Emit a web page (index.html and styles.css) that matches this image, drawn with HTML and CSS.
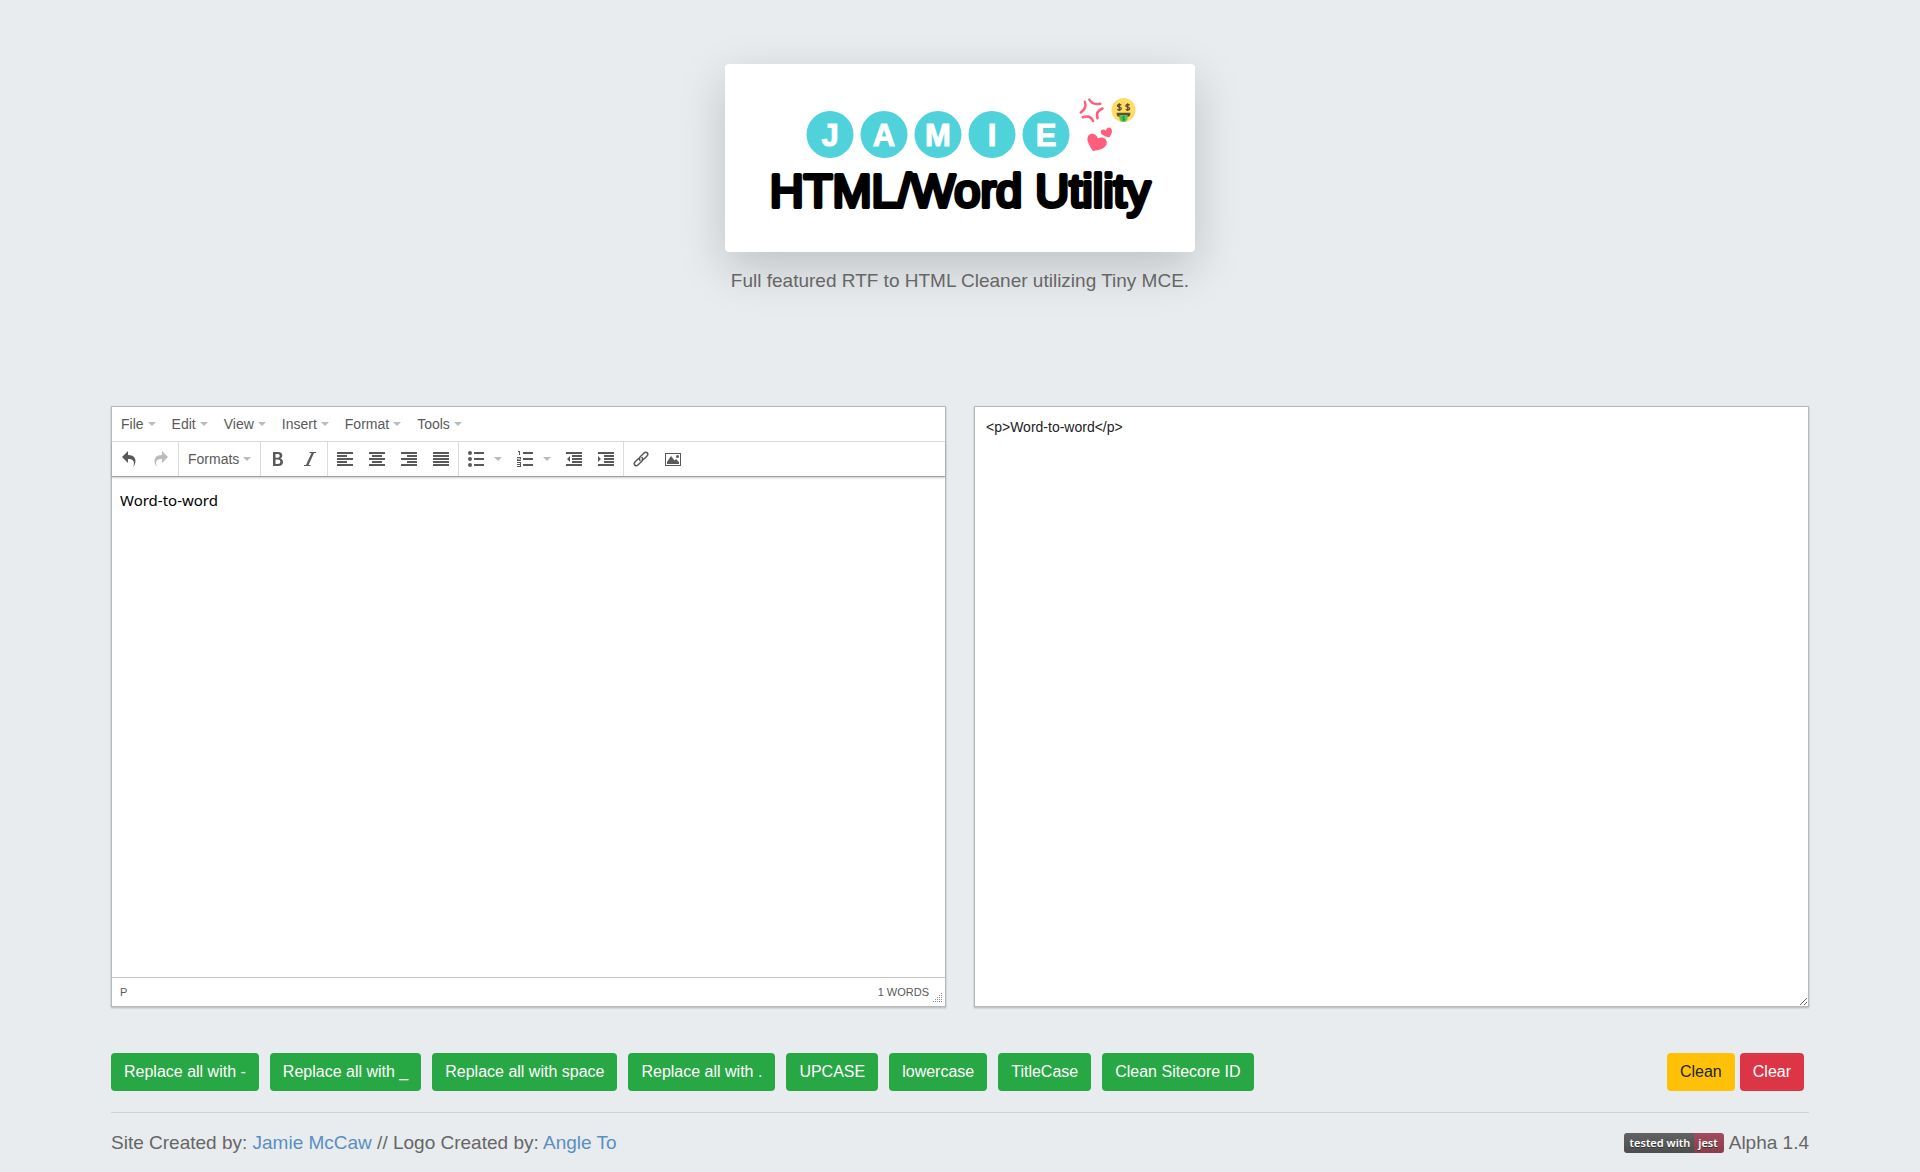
FILE: index.html
```html
<!DOCTYPE html>
<html lang="en">
<head>
<meta charset="utf-8">
<title>HTML/Word Utility</title>
<link rel="stylesheet" href="styles.css">
</head>
<body>
<header class="masthead">
  <svg class="logo" viewBox="0 0 470 188" role="img" aria-label="Jamie HTML/Word Utility">
    <g fill="#4fd2da">
      <circle cx="105" cy="70.500" r="23.500"/><circle cx="159" cy="70.500" r="23.500"/><circle cx="213" cy="70.500" r="23.500"/><circle cx="267" cy="70.500" r="23.500"/><circle cx="321" cy="70.500" r="23.500"/>
    </g>
    <g class="logo-initials">
      <text x="105" y="82">J</text><text x="159" y="82">A</text><text x="213" y="82">M</text><text x="267" y="82">I</text><text x="321" y="82">E</text>
    </g>
    <text class="logo-title" x="235" y="143">HTML/Word Utility</text>
    <g fill="none" stroke="#ff5d7c" stroke-width="2.500" stroke-linecap="round">
      <path d="M364.300 35.500Q367.500 41.300 375.300 39.700"/>
      <path d="M359.800 37.800Q362.500 43.500 355.800 48.500"/>
      <path d="M377.500 44.500Q370.200 47.500 372.500 54.300"/>
      <path d="M357.800 53.300Q365.500 50.800 368 57"/>
    </g>
    <circle cx="398.500" cy="46" r="12" fill="#ffdc67"/>
    <path d="M391.700 48.800H405.300V50.800Q405 52.600 403 52.800H394Q392 52.600 391.700 50.800Z" fill="#664e27"/>
    <path d="M394.500 51H402.500V54.500Q402 58 398.500 58Q395 58 394.500 54.500Z" fill="#4bc958"/>
    <g fill="none" stroke="#664e27" stroke-width="1.300">
      <path d="M396.300 41.200Q394.300 39.800 392.600 41.200Q392 42.600 394.300 43.100Q396.800 43.700 396.100 45.200Q394.300 46.700 392.300 45.200M394.300 39.300V47"/>
      <path d="M404.700 41.200Q402.700 39.800 401 41.200Q400.400 42.600 402.700 43.100Q405.200 43.700 404.500 45.200Q402.700 46.700 400.700 45.200M402.700 39.300V47"/>
    </g>
    <path d="M399.800 52.800Q397.500 52 397.300 53.400Q397.500 54.200 398.500 54.300Q400 54.600 399.600 55.700Q398.500 56.500 397.200 55.800M398.500 52V57" fill="none" stroke="#2b8837" stroke-width=".8"/>
    <path d="M368 87C363 80 361 74.500 363.500 71.500C366 68.300 371.500 69.300 373 74.500C377 71.800 382 74.300 381.800 78.500C381.500 84 376 86 368 87Z" fill="#ff5d7c"/>
    <path d="M384.500 73.300C379 72.500 375.800 70.500 375.800 67.800C376 65.300 379 64.600 381 66.700C381.500 63.500 384.800 62.600 386.300 64.800C387.800 67 386.800 70 384.500 73.300Z" fill="#ff5d7c"/>
  </svg>
  <p class="tagline">Full featured RTF to HTML Cleaner utilizing Tiny MCE.</p>
</header>

<main class="container">
  <div class="panes">
    <section class="editor" aria-label="Rich text editor">
      <div class="menubar">
        <button class="tool" type="button">File<i class="caret"></i></button>
        <button class="tool" type="button">Edit<i class="caret"></i></button>
        <button class="tool" type="button">View<i class="caret"></i></button>
        <button class="tool" type="button">Insert<i class="caret"></i></button>
        <button class="tool" type="button">Format<i class="caret"></i></button>
        <button class="tool" type="button">Tools<i class="caret"></i></button>
      </div>
      <div class="toolbar">
        <div class="group">
          <button class="tool" type="button" aria-label="Undo"><svg class="icon" viewBox="0 0 1024 1024"><path d="M761.862 1024c113.726-206.032 132.888-520.304-313.862-509.824v253.824l-384-384 384-384v248.372c534.962-13.942 594.570 472.214 313.862 775.628z"/></svg></button>
          <button class="tool" type="button" aria-label="Redo" disabled><svg class="icon" viewBox="0 0 1024 1024"><path d="M576 248.372v-248.372l384 384-384 384v-253.824c-446.750-10.482-427.588 303.792-313.860 509.824-280.712-303.414-221.100-789.570 313.860-775.628z"/></svg></button>
        </div>
        <div class="group">
          <button class="tool" type="button">Formats<i class="caret"></i></button>
        </div>
        <div class="group">
          <button class="tool" type="button" aria-label="Bold"><svg class="icon" viewBox="0 0 16 16"><path fill-rule="evenodd" d="M3 1H8C11 1 12.300 2.500 12.300 4.500C12.300 6 11.500 7 10.300 7.500C12 8 13 9.200 13 11C13 13.500 11.300 15 8.300 15H3ZM5.500 3V6.700H7.500C9 6.700 9.700 6 9.700 4.800C9.700 3.500 9 3 7.500 3ZM5.500 8.600V13H7.800C9.500 13 10.300 12.200 10.300 10.800C10.300 9.300 9.500 8.600 7.800 8.600Z"/></svg></button>
          <button class="tool" type="button" aria-label="Italic"><svg class="icon" viewBox="0 0 16 16"><path d="M14 1V2H12L6.500 14H8.500V15H2V14H4L9.500 2H7.500V1Z"/></svg></button>
        </div>
        <div class="group">
          <button class="tool" type="button" aria-label="Align left"><svg class="icon" viewBox="0 0 16 16"><path d="M0 1h16v2H0zM0 4h10v2H0zM0 7h16v2H0zM0 10h10v2H0zM0 13h16v2H0z"/></svg></button>
          <button class="tool" type="button" aria-label="Align center"><svg class="icon" viewBox="0 0 16 16"><path d="M0 1h16v2H0zM3 4h10v2H3zM0 7h16v2H0zM3 10h10v2H3zM0 13h16v2H0z"/></svg></button>
          <button class="tool" type="button" aria-label="Align right"><svg class="icon" viewBox="0 0 16 16"><path d="M0 1h16v2H0zM6 4h10v2H6zM0 7h16v2H0zM6 10h10v2H6zM0 13h16v2H0z"/></svg></button>
          <button class="tool" type="button" aria-label="Justify"><svg class="icon" viewBox="0 0 16 16"><path d="M0 1h16v2H0zM0 4h16v2H0zM0 7h16v2H0zM0 10h16v2H0zM0 13h16v2H0z"/></svg></button>
        </div>
        <div class="group">
          <button class="tool split" type="button" aria-label="Bullet list"><svg class="icon" viewBox="0 0 16 16"><circle cx="2" cy="2" r="2"/><circle cx="2" cy="8" r="2"/><circle cx="2" cy="14" r="2"/><path d="M6 1h10v2H6zM6 7h10v2H6zM6 13h10v2H6z"/></svg><i class="caret"></i></button>
          <button class="tool split" type="button" aria-label="Numbered list"><svg class="icon" viewBox="0 0 16 16"><path d="M6 1h10v2H6zM6 7h10v2H6zM6 13h10v2H6zM1 0h2v4H2V1H1zM0 6h4v2.500H1V9h3v1H0V7.700h3V7H0zM0 11h4v5H0v-1h3v-1H0v-1h3v-1H0z"/></svg><i class="caret"></i></button>
          <button class="tool" type="button" aria-label="Decrease indent"><svg class="icon" viewBox="0 0 16 16"><path d="M0 1h16v2H0zM6 4h10v2H6zM6 7h10v2H6zM6 10h10v2H6zM0 13h16v2H0zM4 5v6L1 8z"/></svg></button>
          <button class="tool" type="button" aria-label="Increase indent"><svg class="icon" viewBox="0 0 16 16"><path d="M0 1h16v2H0zM6 4h10v2H6zM6 7h10v2H6zM6 10h10v2H6zM0 13h16v2H0zM0 5v6l3-3z"/></svg></button>
        </div>
        <div class="group">
          <button class="tool" type="button" aria-label="Insert link"><svg class="icon" viewBox="0 0 16 16"><g fill="none" stroke="#595959" stroke-width="1.500" stroke-linecap="round"><path d="M7 9.500C6 8.500 6 7 7 6L10.800 2.200C12 1 13.300 1 14.200 1.900S15 4 13.800 5.200L11 8Q10.200 8.700 9.300 8.500"/><path d="M9 6.500C10 7.500 10 9 9 10L5.200 13.800C4 15 2.700 15 1.800 14.100S1 12 2.200 10.800L5 8Q5.800 7.300 6.700 7.500"/></g></svg></button>
          <button class="tool" type="button" aria-label="Insert image"><svg class="icon" viewBox="0 0 16 16"><path fill-rule="evenodd" d="M0 2h16v13H0zM1 3v11h14V3z"/><path d="M2 13V11L6 5L9.500 9.500L11 8L14 11V13Z"/><circle cx="12.500" cy="5.500" r="1.500"/></svg></button>
        </div>
      </div>
      <div class="document" contenteditable="true" spellcheck="false" role="textbox" aria-label="Document"><p>Word-to-word</p></div>
      <div class="statusbar">
        <span>P</span>
        <span class="wordcount">1 WORDS</span>
        <svg class="grip" viewBox="0 0 10 10" fill="#8c8c8c"><path d="M8 0h1v1h-1zM6 2h1v1h-1zM8 2h1v1h-1zM4 4h1v1h-1zM6 4h1v1h-1zM8 4h1v1h-1zM2 6h1v1h-1zM4 6h1v1h-1zM6 6h1v1h-1zM8 6h1v1h-1zM0 8h1v1h-1zM2 8h1v1h-1zM4 8h1v1h-1zM6 8h1v1h-1zM8 8h1v1h-1z"/></svg>
      </div>
    </section>
    <textarea class="source" aria-label="HTML source" spellcheck="false">&lt;p&gt;Word-to-word&lt;/p&gt;</textarea>
  </div>

  <div class="actions">
    <div class="transforms">
      <button class="btn" type="button">Replace all with -</button>
      <button class="btn" type="button">Replace all with _</button>
      <button class="btn" type="button">Replace all with space</button>
      <button class="btn" type="button">Replace all with .</button>
      <button class="btn" type="button">UPCASE</button>
      <button class="btn" type="button">lowercase</button>
      <button class="btn" type="button">TitleCase</button>
      <button class="btn" type="button">Clean Sitecore ID</button>
    </div>
    <div class="resets">
      <button class="btn btn-warning" type="button">Clean</button>
      <button class="btn btn-danger" type="button">Clear</button>
    </div>
  </div>
</main>

<footer class="container">
  <div class="credits">
    <p>Site Created by: <a href="#">Jamie McCaw</a> // Logo Created by: <a href="#">Angle To</a></p>
    <p class="version"><span class="badge"><span class="badge-label">tested with</span><span class="badge-value">jest</span></span>Alpha 1.4</p>
  </div>
</footer>
</body>
</html>
```
FILE: styles.css
```css
* {
  box-sizing: border-box;
}

body {
  margin: 0;
  background: #e8ecef;
  color: #666;
  font: 19px/28px "Liberation Sans", Arial, sans-serif;
}

p {
  margin: 0;
}

a {
  color: #5a8fc0;
  text-decoration: none;
}

button {
  margin: 0;
  border: 0;
  font-family: inherit;
  cursor: pointer;
}

.masthead {
  display: flex;
  flex-direction: column;
  align-items: center;
  gap: 15px;
  padding: 64px 16px 111px;
}

.logo {
  width: 470px;
  max-width: 100%;
  border-radius: 4px;
  background: #fff;
  box-shadow: 0 16px 48px rgba(0, 0, 0, .18);
}

.logo-initials {
  fill: #fff;
  stroke: #fff;
  stroke-width: 1px;
  font-size: 31px;
  font-weight: bold;
  text-anchor: middle;
}

.logo-title {
  fill: #000;
  stroke: #000;
  stroke-width: 4px;
  stroke-linejoin: round;
  font-size: 47px;
  text-anchor: middle;
}

.container {
  width: 90%;
  margin: 0 auto;
  padding: 0 15px;
}

.panes {
  display: grid;
  grid-template-columns: 1fr 1fr;
  gap: 28px;
}

.editor,
.source {
  border: 1px solid #b8b8b8;
  background: #fff;
  box-shadow: 0 1px 2px rgba(0, 0, 0, .25);
}

.menubar,
.toolbar {
  display: flex;
}

.menubar {
  padding: 0 1px;
  border-bottom: 1px solid #dcdcdc;
}

.toolbar {
  border-bottom: 1px solid #9e9e9e;
  box-shadow: 0 1px 2px rgba(0, 0, 0, .2);
}

.group {
  display: flex;
  padding: 0 1px;
}

.group + .group {
  border-left: 1px solid #dcdcdc;
}

.tool {
  display: flex;
  align-items: center;
  gap: 4px;
  height: 34px;
  padding: 0 8px;
  background: none;
  color: #595959;
  font-size: 14px;
}

.tool:disabled {
  opacity: .4;
}

.split {
  gap: 10px;
  padding-right: 7px;
}

.icon {
  width: 16px;
  height: 16px;
  fill: #595959;
}

.caret {
  border: 4px solid transparent;
  border-top-color: #b5bcc2;
  border-bottom: 0;
}

.document {
  min-height: 500px;
  padding: 12px 8px;
  outline: 0;
  color: #000;
  font: 15px/22px "Noto Sans", sans-serif;
}

.statusbar {
  display: flex;
  align-items: center;
  height: 29px;
  padding: 0 2px 0 8px;
  border-top: 1px solid #c5c5c5;
  color: #595959;
  font-size: 11px;
}

.wordcount {
  margin-left: auto;
  padding-right: 4px;
}

.grip {
  align-self: flex-end;
  width: 10px;
  height: 10px;
  margin-bottom: 3px;
}

.source {
  width: 100%;
  padding: 10px 11px;
  outline: 0;
  color: #222;
  font: 14px/20px "Liberation Sans", Arial, sans-serif;
  resize: both;
}

.actions {
  display: flex;
  flex-wrap: wrap;
  justify-content: space-between;
  gap: 12px;
  padding: 46px 5px 21px 0;
  border-bottom: 1px solid #cfd3d6;
}

.transforms,
.resets {
  display: flex;
  flex-wrap: wrap;
  gap: 11px;
}

.resets {
  gap: 5px;
}

.btn {
  padding: 6px 13px;
  border-radius: 4px;
  background: #28a745;
  color: #fff;
  font-size: 16px;
  line-height: 26px;
}

.btn-warning {
  background: #ffc107;
  color: #212529;
}

.btn-danger {
  background: #dc3545;
}

.credits {
  display: flex;
  flex-wrap: wrap;
  justify-content: space-between;
  padding: 16px 0;
}

.version {
  display: flex;
  align-items: center;
  gap: 5px;
}

.badge {
  display: flex;
  overflow: hidden;
  border-radius: 3px;
  color: #fff;
  font: 600 11px/20px "Noto Sans", Verdana, sans-serif;
  text-shadow: 0 1px #333;
}

.badge-label {
  padding: 0 4px 0 6px;
  background: linear-gradient(#626262, #4d4d4d);
}

.badge-value {
  padding: 0 6px 0 4px;
  background: linear-gradient(#a24c5f, #883d4d);
}
```
